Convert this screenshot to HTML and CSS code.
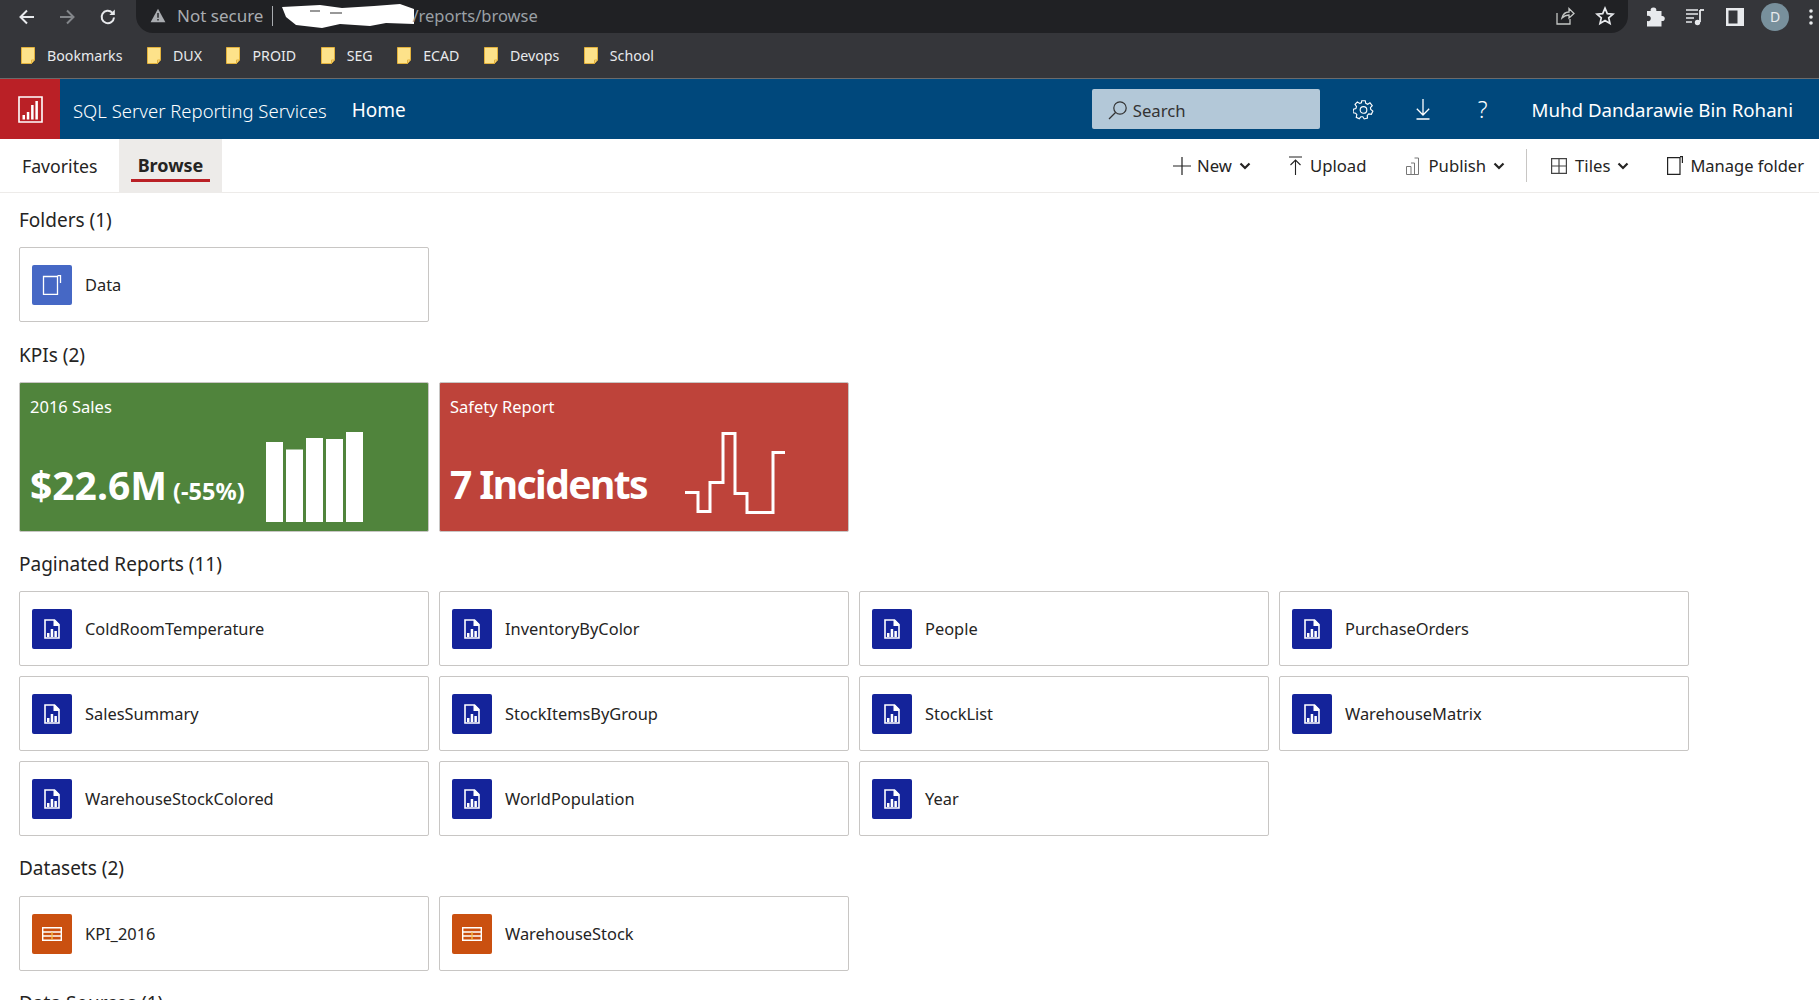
FILE: index.html
```html
<!DOCTYPE html>
<html lang="en">
<head>
  <meta charset="UTF-8" />
  <title>SQL Server Reporting Services</title>
  <link rel="stylesheet" href="styles.css">
</head>
<body>

<svg class="sprites" width="0" height="0">
  <symbol id="bm-folder" viewBox="0 0 14 17">
    <path d="M.5.5H13.5V13L10.5 16.5H.5Z" fill="#fde28a" stroke="#e3b23c"/>
    <path d="M10.5 16.5V13H13.5" fill="none" stroke="#e3b23c"/>
  </symbol>
  <symbol id="chev" viewBox="0 0 12 8">
    <path d="M1.500 1.500 6 6 10.500 1.500" fill="none" stroke="currentColor" stroke-width="2.200"/>
  </symbol>
  <symbol id="report" viewBox="0 0 20 20">
    <path d="M3 1H12.500L17 5.500V19H3Z" fill="none" stroke="#fff" stroke-width="1.600"/>
    <path d="M11.500 1H13L17 5V7H11.500Z" fill="#fff"/>
    <path d="M5 14H7.500V18H5ZM8.700 10H11.200V18H8.700ZM12.400 12H14.900V18H12.400Z" fill="#fff"/>
  </symbol>
  <symbol id="dataset" viewBox="0 0 20 14">
    <path d="M.7.7H19.300V13.300H.7Z" fill="none" stroke="#fff" stroke-width="1.400"/>
    <path d="M.7 5H19.300M.7 9H19.300" fill="none" stroke="#fff" stroke-width="1.300"/>
    <path d="M10 5V13" stroke="#f5c04a" stroke-width="1.300"/>
  </symbol>
</svg>

<div class="chrome">
  <div class="toolbar">
    <svg class="tb-icon back" width="18" height="18" viewBox="0 0 18 18"><path d="M16 9H3M9 2.500 2.500 9 9 15.500" fill="none" stroke="#e8eaed" stroke-width="2"/></svg>
    <svg class="tb-icon fwd" width="18" height="18" viewBox="0 0 18 18"><path d="M2 9H15M9 2.500 15.500 9 9 15.500" fill="none" stroke="#83868a" stroke-width="2"/></svg>
    <svg class="tb-icon reload" width="18" height="18" viewBox="0 0 18 18"><path d="M15 9.500A6.200 6.200 0 1 1 13.200 4.600" fill="none" stroke="#e8eaed" stroke-width="2"/><path d="M15.800 1.500V7H10.300Z" fill="#e8eaed"/></svg>
    <div class="omnibox">
      <svg width="16" height="15" viewBox="0 0 16 15"><path d="M8 .8 15.400 14.200H.6Z" fill="#a9acb0"/><path d="M8 5V9.800M8 11V12.600" stroke="#202124" stroke-width="1.400"/></svg>
      <span class="not-secure">Not secure</span>
      <span class="omni-sep"></span>
      <svg class="scribble" width="132" height="26" viewBox="0 0 132 26"><path d="M0 4 38 2 60 5 92 3 118 1 132 6V21L104 20 88 23 58 21 40 25 14 22 4 14Z" fill="#fff"/><path d="M28 8H38M48 10H60" stroke="#777" stroke-width="1.500"/></svg>
      <span class="url">/reports/browse</span>
      <svg class="share" width="20" height="20" viewBox="0 0 20 20"><path d="M2 7V18H15V13M7 12C8 8 11 6 14 6V2.500L19 7.500 14 12V9C11 9 9 10 7 12Z" fill="none" stroke="#c4c7c5" stroke-width="1.300"/></svg>
      <svg class="star" width="20" height="20" viewBox="0 0 20 20"><path d="M10 2.200 12.300 7.600 18 8.100 13.700 11.900 15 17.600 10 14.600 5 17.600 6.300 11.900 2 8.100 7.700 7.600Z" fill="none" stroke="#e8eaed" stroke-width="1.700"/></svg>
    </div>
    <div class="tb-right">
      <svg class="puzzle" width="20" height="20" viewBox="0 0 20 20"><path d="M8.500 .5C10.800 .5 11.800 2.200 11.300 4H16.500V9C18.300 8.500 19.800 9.700 19.800 11.500S18.300 14.500 16.500 14V19.500H2V14C4.200 14.600 5.800 13.300 5.800 11.500S4.200 8.400 2 9V4H5.700C5.200 2.200 6.200 .5 8.500 .5Z" fill="#e8eaed"/></svg>
      <svg class="queue" width="20" height="20" viewBox="0 0 20 20"><path d="M1 3H13M1 7H13M1 11H9M1 15H7" stroke="#e8eaed" stroke-width="1.600"/><path d="M15 3V15" stroke="#e8eaed" stroke-width="1.800"/><path d="M15 3H19" stroke="#e8eaed" stroke-width="1.800"/><circle cx="12.500" cy="15.500" r="2.700" fill="#e8eaed"/></svg>
      <svg class="panel" width="20" height="20" viewBox="0 0 20 20"><path d="M1 1H19V19H1Z" fill="#e8eaed"/><path d="M3.500 3.500H12.500V16.500H3.500Z" fill="#35363a"/></svg>
      <span class="avatar">D</span>
      <svg class="dots" width="4" height="18" viewBox="0 0 4 18"><circle cx="2" cy="3" r="1.800" fill="#e8eaed"/><circle cx="2" cy="9" r="1.800" fill="#e8eaed"/><circle cx="2" cy="15" r="1.800" fill="#e8eaed"/></svg>
    </div>
  </div>
  <div class="bookmarks">
    <a class="bm"><svg width="14" height="17"><use href="#bm-folder"/></svg>Bookmarks</a>
    <a class="bm"><svg width="14" height="17"><use href="#bm-folder"/></svg>DUX</a>
    <a class="bm"><svg width="14" height="17"><use href="#bm-folder"/></svg>PROID</a>
    <a class="bm"><svg width="14" height="17"><use href="#bm-folder"/></svg>SEG</a>
    <a class="bm"><svg width="14" height="17"><use href="#bm-folder"/></svg>ECAD</a>
    <a class="bm"><svg width="14" height="17"><use href="#bm-folder"/></svg>Devops</a>
    <a class="bm"><svg width="14" height="17"><use href="#bm-folder"/></svg>School</a>
  </div>
</div>

<header class="app-header">
  <div class="logo">
    <svg width="25" height="27" viewBox="0 0 25 27"><path d="M1 1H24V26H1Z" fill="none" stroke="#fff" stroke-width="1.600"/><path d="M4.500 19H7V23.500H4.500ZM8.800 16H11.300V23.500H8.800ZM13.100 9H15.600V23.500H13.100ZM17.400 5H19.900V23.500H17.400Z" fill="#fff"/></svg>
  </div>
  <span class="app-title">SQL Server Reporting Services</span>
  <span class="app-home">Home</span>
  <div class="search">
    <svg width="20" height="20" viewBox="0 0 20 20"><circle cx="12" cy="8" r="6.200" fill="none" stroke="#333" stroke-width="1.200"/><path d="M7.500 12.500 1 19" stroke="#333" stroke-width="1.200"/></svg>
    <span>Search</span>
  </div>
  <svg class="hd-icon gear" width="21" height="21" viewBox="0 0 24 24"><path d="M10 2H14L14.600 5 16.800 6 19.400 4.400 22 7.600 19.900 9.800 20.300 12 22.700 13.800 21 17.500 18 17 16.300 18.700 16.500 21.800 12.800 22.800 11.200 20.300H9L7.200 22.500 3.700 21 4.400 18 3 16.200 0 15.700 0.500 11.800 3.300 11 4 8.800 2.300 6.200 5 3.500 7.600 5 9.600 4.300Z" fill="none" stroke="#fff" stroke-width="1.300"/><circle cx="12" cy="12.500" r="3.800" fill="none" stroke="#fff" stroke-width="1.300"/></svg>
  <svg class="hd-icon dl" width="16" height="22" viewBox="0 0 16 22"><path d="M8 1V17M1.800 10.800 8 17 14.200 10.800M1.500 21H14.500" fill="none" stroke="#fff" stroke-width="1.300"/></svg>
  <span class="hd-help">?</span>
  <span class="user-name">Muhd Dandarawie Bin Rohani</span>
</header>

<nav class="subnav">
  <a class="tab">Favorites</a>
  <a class="tab active"><span>Browse</span></a>
  <div class="actions">
    <a class="act act-new"><svg width="18" height="18" viewBox="0 0 18 18"><path d="M9 0V18M0 9H18" stroke="#222" stroke-width="1.200"/></svg>New<svg class="chev" width="12" height="8"><use href="#chev"/></svg></a>
    <a class="act act-upload"><svg width="13" height="19" viewBox="0 0 13 19"><path d="M0 1H13M6.500 4V19M1.500 9 6.500 4 11.500 9" fill="none" stroke="#222" stroke-width="1.100"/></svg>Upload</a>
    <a class="act act-publish"><svg width="13" height="18" viewBox="0 0 13 18"><path d="M.5 9.500H5V17.500H.5ZM5 6H8.500V17.500M8.500 1H12.500V17.500H5" fill="none" stroke="#777" stroke-width="1"/></svg>Publish<svg class="chev" width="12" height="8"><use href="#chev"/></svg></a>
    <span class="act-sep"></span>
    <a class="act act-tiles"><svg width="16" height="16" viewBox="0 0 16 16"><path d="M.6.6H15.400V15.400H.6ZM8 .6V15.400M.6 8H15.400" fill="none" stroke="#444" stroke-width="1.200"/></svg>Tiles<svg class="chev" width="12" height="8"><use href="#chev"/></svg></a>
    <a class="act act-manage"><svg width="16" height="19" viewBox="0 0 16 19"><path d="M.6 1.600H13V18.400H.6ZM13 .6H15.400V7" fill="none" stroke="#222" stroke-width="1.200"/></svg>Manage folder</a>
  </div>
</nav>

<main class="content">
  <h2 class="sec-title">Folders (1)</h2>
  <div class="tiles first">
    <a class="tile"><span class="tile-icon folder"><svg width="20" height="20" viewBox="0 0 20 20"><path d="M1.500 1.500H15.500V19.300H1.500ZM15.500 .7H18.500V8" fill="none" stroke="#fff" stroke-width="1.300"/></svg></span>Data</a>
  </div>

  <h2 class="sec-title">KPIs (2)</h2>
  <div class="tiles kpis">
    <div class="kpi kpi-green">
      <div class="kpi-name">2016 Sales</div>
      <div class="kpi-body">
        <div class="kpi-value">$22.6M <small>(-55%)</small></div>
        <svg width="97" height="90" viewBox="0 0 97 90">
          <rect x="0" y="10" width="17" height="80" fill="#fff"/>
          <rect x="20" y="17.500" width="17" height="72.500" fill="#fff"/>
          <rect x="40" y="6" width="17" height="84" fill="#fff"/>
          <rect x="60" y="7" width="17" height="83" fill="#fff"/>
          <rect x="80" y="0" width="17" height="90" fill="#fff"/>
        </svg>
      </div>
    </div>
    <div class="kpi kpi-red">
      <div class="kpi-name">Safety Report</div>
      <div class="kpi-body">
        <div class="kpi-value">7 Incidents</div>
        <svg width="100" height="90" viewBox="0 0 100 90"><path d="M0 60.500H13V79.500H25V50.500H38V1.500H50V61.500H62V80.500H88V20.500H100" fill="none" stroke="#fff" stroke-width="3"/></svg>
      </div>
    </div>
  </div>

  <h2 class="sec-title">Paginated Reports (11)</h2>
  <div class="tiles">
    <a class="tile"><span class="tile-icon rep"><svg width="20" height="20"><use href="#report"/></svg></span>ColdRoomTemperature</a>
    <a class="tile"><span class="tile-icon rep"><svg width="20" height="20"><use href="#report"/></svg></span>InventoryByColor</a>
    <a class="tile"><span class="tile-icon rep"><svg width="20" height="20"><use href="#report"/></svg></span>People</a>
    <a class="tile"><span class="tile-icon rep"><svg width="20" height="20"><use href="#report"/></svg></span>PurchaseOrders</a>
    <a class="tile"><span class="tile-icon rep"><svg width="20" height="20"><use href="#report"/></svg></span>SalesSummary</a>
    <a class="tile"><span class="tile-icon rep"><svg width="20" height="20"><use href="#report"/></svg></span>StockItemsByGroup</a>
    <a class="tile"><span class="tile-icon rep"><svg width="20" height="20"><use href="#report"/></svg></span>StockList</a>
    <a class="tile"><span class="tile-icon rep"><svg width="20" height="20"><use href="#report"/></svg></span>WarehouseMatrix</a>
    <a class="tile"><span class="tile-icon rep"><svg width="20" height="20"><use href="#report"/></svg></span>WarehouseStockColored</a>
    <a class="tile"><span class="tile-icon rep"><svg width="20" height="20"><use href="#report"/></svg></span>WorldPopulation</a>
    <a class="tile"><span class="tile-icon rep"><svg width="20" height="20"><use href="#report"/></svg></span>Year</a>
  </div>

  <h2 class="sec-title">Datasets (2)</h2>
  <div class="tiles datasets">
    <a class="tile"><span class="tile-icon ds"><svg width="20" height="14"><use href="#dataset"/></svg></span>KPI_2016</a>
    <a class="tile"><span class="tile-icon ds"><svg width="20" height="14"><use href="#dataset"/></svg></span>WarehouseStock</a>
  </div>

  <h2 class="sec-title">Data Sources (1)</h2>
</main>

</body>
</html>
```
FILE: styles.css
```css
html, body {
  margin: 0;
  height: 1000px;
  overflow: hidden;
}
body {
  font-family: "Noto Sans", sans-serif;
  background: white;
  color: #252423;
}
.sprites { position: absolute; }
a { color: inherit; text-decoration: none; }

/* browser chrome */
.chrome {
  background: #35363a;
  height: 78px;
  border-bottom: 1px solid #6b6b6b;
}
.toolbar {
  height: 33px;
  display: flex;
  align-items: center;
}
.tb-icon { flex: none; }
.back { margin-left: 18px; }
.fwd { margin-left: 22px; }
.reload { margin-left: 23px; }
.omnibox {
  flex: none;
  margin-left: 19px;
  width: 1492px;
  height: 33px;
  box-sizing: border-box;
  padding: 0 0 2px 14px;
  background: #202124;
  border-radius: 0 0 17px 17px;
  display: flex;
  align-items: center;
  font-size: 17px;
  color: #a9acb0;
}
.not-secure { margin-left: 11px; }
.omni-sep {
  width: 1px;
  height: 20px;
  background: #a9acb0;
  margin-left: 9px;
}
.scribble { margin-left: 9px; flex: none; }
.url { color: #9aa0a6; font-size: 16.500px; margin-left: -2px; }
.share { margin-left: auto; }
.star { margin: 0 13px 0 20px; }
.tb-right {
  display: flex;
  align-items: center;
  gap: 19px;
  margin-left: 17px;
  color: #e8eaed;
}
.tb-right svg, .avatar { flex: none; }
.queue { margin-left: 1px; }
.panel { margin-left: 1px; }
.avatar {
  width: 28px;
  height: 28px;
  border-radius: 50%;
  background: #78909c;
  color: #e8eaed;
  font-size: 14px;
  text-align: center;
  line-height: 28px;
  margin-left: -3px;
}
.dots { margin-left: 1px; }
.bookmarks {
  height: 45px;
  display: flex;
  align-items: center;
  gap: 24.500px;
  padding-left: 21px;
  font-size: 14.200px;
  color: #e8eaed;
}
.bm {
  display: flex;
  align-items: center;
  gap: 12px;
}

/* report server header */
.app-header {
  height: 60px;
  background: #00487c;
  color: white;
  display: flex;
  align-items: center;
}
.logo {
  width: 60px;
  height: 60px;
  background: #ba2026;
  display: flex;
  align-items: center;
  justify-content: center;
}
.app-title {
  margin: 2px 0 0 13px;
  font-size: 18.500px;
  font-weight: 300;
}
.app-home {
  margin: 2px 0 0 25px;
  font-size: 19px;
}
.search {
  margin-left: auto;
  width: 228px;
  height: 40px;
  box-sizing: border-box;
  padding: 2px 0 0 16px;
  background: #b3c8d8;
  border-radius: 2px;
  color: #333;
  font-size: 16.700px;
  display: flex;
  align-items: center;
  gap: 5px;
}
.gear { margin-left: 33px; }
.dl { margin-left: 41px; }
.hd-help {
  margin-left: 47px;
  font-size: 23px;
  font-weight: 300;
}
.user-name {
  margin-left: 44px;
  margin-right: 26px;
  font-size: 18.700px;
}

/* browse tabs and commands */
.subnav {
  height: 53px;
  border-bottom: 1px solid #edebe9;
  display: flex;
  font-size: 16.700px;
}
.tab {
  display: flex;
  align-items: center;
  font-size: 17.700px;
}
.tab:first-child {
  padding-left: 22px;
  width: 97px;
}
.tab.active {
  width: 103px;
  background: #edebe9;
  justify-content: center;
  font-size: 18px;
  font-weight: 700;
}
.tab.active span {
  align-self: flex-start;
  margin-top: 13px;
  padding: 0 7px;
  line-height: 27px;
  border-bottom: 3px solid #ba2026;
}
.actions {
  margin-left: auto;
  margin-right: 15px;
  display: flex;
  align-items: center;
}
.act {
  display: flex;
  align-items: center;
  gap: 6px;
}
.chev { margin-left: 1px; }
.act-upload { margin-left: 38px; }
.act-upload svg:first-child { margin-right: 2px; }
.act-publish { margin-left: 39px; }
.act-publish svg:first-child { margin-right: 4px; }
.act-sep {
  width: 1px;
  height: 33px;
  background: #c8c6c4;
  margin-left: 21px;
}
.act-tiles { margin-left: 24px; }
.act-tiles svg:first-child { margin-right: 2px; }
.act-manage { margin-left: 38px; font-size: 16.500px; }
.act-manage svg:first-child { margin-right: 1px; }

/* content */
.content { padding: 12px 0 0 19px; }
.sec-title {
  margin: 0 0 12px;
  font-size: 19px;
  font-weight: 400;
  line-height: 30px;
}
.tiles {
  display: grid;
  grid-template-columns: repeat(4, 410px);
  gap: 10px;
  margin-bottom: 17px;
}
.tiles.first { margin-bottom: 18px; }
.tiles.datasets { margin-top: 13px; }
.tile {
  height: 75px;
  box-sizing: border-box;
  padding-left: 12px;
  border: 1px solid #c8c6c4;
  border-radius: 2px;
  display: flex;
  align-items: center;
  gap: 13px;
  font-size: 16.400px;
}
.tile-icon {
  width: 40px;
  height: 40px;
  border-radius: 2px;
  display: flex;
  align-items: center;
  justify-content: center;
}
.folder { background: #4668c5; }
.rep { background: #14239a; }
.ds { background: #ca5010; }

.kpi {
  height: 150px;
  box-sizing: border-box;
  border: 1px solid #c8c6c4;
  border-radius: 2px;
  color: white;
  padding: 12px 10px 0;
}
.kpi-green { background: #50843c; }
.kpi-red { background: #be433a; }
.kpi-name {
  font-size: 16.500px;
  line-height: 24px;
}
.kpi-body {
  display: flex;
  align-items: flex-end;
  margin-top: 13px;
}
.kpi-green .kpi-body { gap: 21px; }
.kpi-red .kpi-body { gap: 38px; }
.kpi-value {
  font-size: 39px;
  font-weight: 700;
  line-height: 54px;
  margin-bottom: 4px;
  white-space: nowrap;
}
.kpi-red .kpi-value { letter-spacing: -1.600px; margin-bottom: 11px; }
.kpi-value small { font-size: 23.500px; margin-left: -4px; }
```
